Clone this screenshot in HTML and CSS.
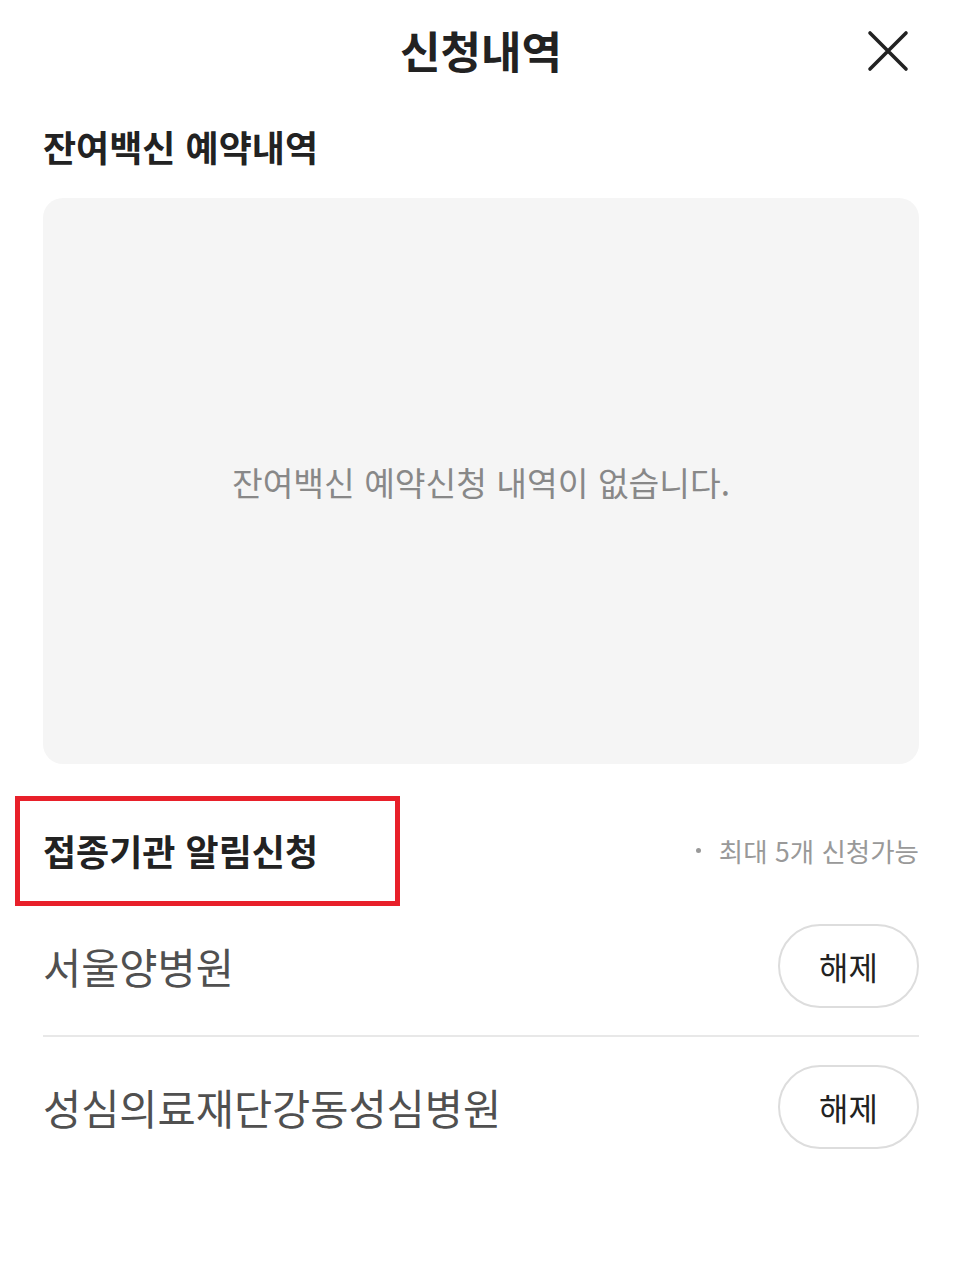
FILE: index.html
```html
<!DOCTYPE html>
<html lang="ko">

<head>
  <meta charset="UTF-8">
  <meta name="viewport" content="width=device-width, initial-scale=1.0">
  <title>신청내역</title>
  <link rel="stylesheet" href="styles.css">
</head>

<body>
  <div class="page">
    <header class="page-header">
      <h1>신청내역</h1>
      <button class="close-button" aria-label="닫기">
        <svg width="42" height="42" viewBox="0 0 42 42">
          <path d="M3 3 L39 39 M39 3 L3 39" stroke="#222" stroke-width="3.6" stroke-linecap="round" fill="none" />
        </svg>
      </button>
    </header>

    <section class="section">
      <h2 class="section-title">잔여백신 예약내역</h2>
      <div class="empty-box">
        <p>잔여백신 예약신청 내역이 없습니다.</p>
      </div>
    </section>

    <section class="section">
      <div class="section-head">
        <h2 class="section-title highlighted">접종기관 알림신청</h2>
        <span class="section-note"><span class="bullet"></span>최대 5개 신청가능</span>
      </div>
      <ul class="hospital-list">
        <li class="hospital-item">
          <span class="hospital-name">서울양병원</span>
          <button class="cancel-button">해제</button>
        </li>
        <li class="hospital-item">
          <span class="hospital-name">성심의료재단강동성심병원</span>
          <button class="cancel-button">해제</button>
        </li>
      </ul>
    </section>
  </div>
</body>

</html>
```

FILE: styles.css
```css
* {
  margin: 0;
  padding: 0;
  box-sizing: border-box;
}

body {
  font-family: "Noto Sans CJK KR", "Noto Sans", sans-serif;
  background-color: white;
  color: #222;
}

.page {
  padding: 0 41px 0 43px;
}

.page-header {
  position: relative;
  height: 100px;
  display: flex;
  justify-content: center;
  align-items: center;
}

.page-header h1 {
  font-size: 44px;
  font-weight: bold;
  color: #222;
}

.close-button {
  position: absolute;
  right: 10px;
  top: 30px;
  background: none;
  border: none;
  cursor: pointer;
}

.section-title {
  font-size: 36px;
  font-weight: bold;
  line-height: 1;
}

.section:first-of-type .section-title {
  margin: 28px 0 34px;
}

.empty-box {
  background-color: #f5f5f5;
  border-radius: 20px;
  height: 566px;
  display: flex;
  justify-content: center;
  align-items: center;
}

.empty-box p {
  font-size: 33.4px;
  color: #888;
}

.section-head {
  display: flex;
  justify-content: space-between;
  align-items: center;
  margin-top: 31px;
  height: 110px;
}

.highlighted {
  position: relative;
}

.highlighted::after {
  content: "";
  box-sizing: border-box;
  position: absolute;
  left: -28px;
  top: -36px;
  width: 385px;
  height: 110px;
  border: 5px solid #e8202a;
}

.section-note {
  display: flex;
  align-items: center;
  font-size: 26.5px;
  color: #999;
}

.bullet {
  width: 5px;
  height: 5px;
  border-radius: 50%;
  background-color: #999;
  margin-right: 18px;
}

.hospital-list {
  list-style: none;
  margin-top: 1px;
}

.hospital-item {
  display: flex;
  justify-content: space-between;
  align-items: center;
  height: 139px;
  border-bottom: 2px solid #e8e8e8;
  padding-bottom: 8px;
}

.hospital-list .hospital-item:first-child {
  height: 131px;
  padding-bottom: 10px;
}

.hospital-item:last-child {
  border-bottom: none;
  padding-bottom: 0;
}

.hospital-name {
  font-size: 41.5px;
  color: #505050;
}

.cancel-button {
  width: 141px;
  height: 84px;
  border: 2px solid #ddd;
  border-radius: 42px;
  background-color: white;
  font-family: inherit;
  font-size: 32px;
  color: #222;
  cursor: pointer;
}
```
